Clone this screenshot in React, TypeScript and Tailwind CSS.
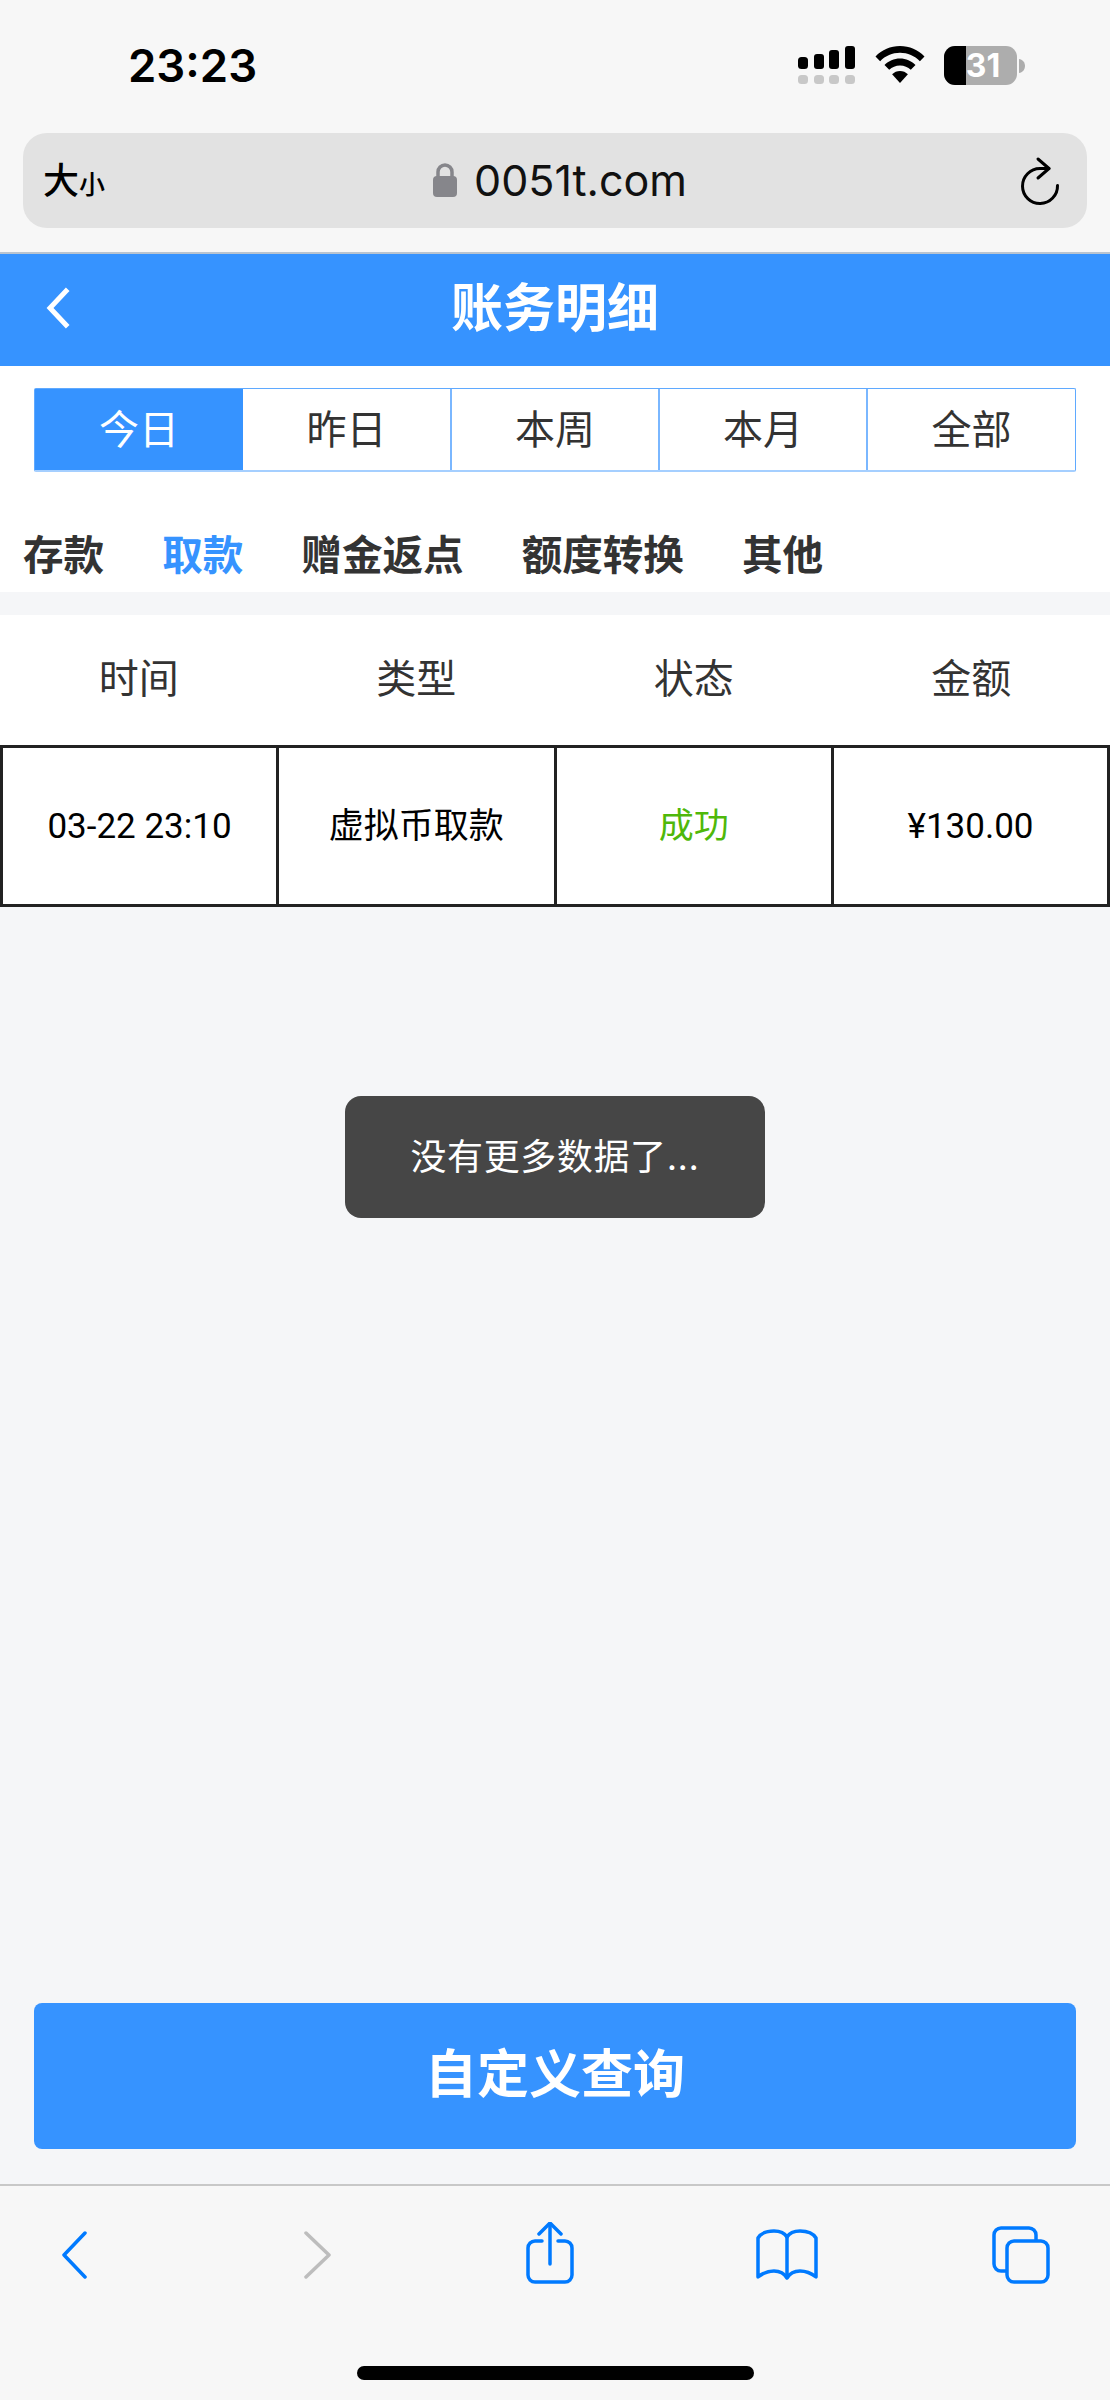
const cjk = "font-['Inter','Noto_Sans_CJK_SC',sans-serif]";

const ranges = ['今日', '昨日', '本周', '本月', '全部'];
const types = ['存款', '取款', '赠金返点', '额度转换', '其他'];
const columns = ['时间', '类型', '状态', '金额'];

const SignalIcon = () => (
  <svg width="58" height="39" viewBox="0 0 58 39">
    <rect x="0" y="11" width="10" height="12" rx="3.5" fill="#000" />
    <rect x="16" y="8" width="10" height="15" rx="3" fill="#000" />
    <rect x="31" y="4" width="10" height="19" rx="3" fill="#000" />
    <rect x="47" y="0" width="10" height="23" rx="3" fill="#000" />
    <rect x="0" y="29" width="10" height="9" rx="3.5" fill="#c8c8c8" />
    <rect x="16" y="29" width="10" height="9" rx="3.5" fill="#c8c8c8" />
    <rect x="31" y="29" width="10" height="9" rx="3.5" fill="#c8c8c8" />
    <rect x="47" y="29" width="10" height="9" rx="3.5" fill="#c8c8c8" />
  </svg>
);

const WifiIcon = () => (
  <svg width="50" height="37" viewBox="0 0 50 37">
    <path d="M25 0C15.5 0 7 3.8.5 10.5l4.6 4.8C10.4 9.8 17.3 6.8 25 6.8s14.6 3 19.9 8.5l4.6-4.8C43 3.8 34.5 0 25 0z" fill="#000" />
    <path d="M25 12.5c-6 0-11.400 2.400-15.500 6.500l4.700 4.800C17 21 20.800 19.400 25 19.400s8 1.600 10.800 4.400l4.700-4.800C36.400 14.900 31 12.500 25 12.500z" fill="#000" />
    <path d="M25 25c-3 0-5.800 1.200-7.900 3.300L25 37l7.900-8.700C30.800 26.200 28 25 25 25z" fill="#000" />
  </svg>
);

const Battery = () => (
  <div className="flex items-center">
    <div className="relative flex h-[39px] w-[73px] overflow-hidden rounded-[11px] bg-[#adadad]">
      <div className="h-full w-[22px] bg-black" />
      <span className="absolute left-[21px] top-0 flex h-full w-[36px] items-center justify-center font-['Inter',sans-serif] text-[32px] font-bold text-white">31</span>
    </div>
    <svg width="7" height="14" viewBox="0 0 7 14" className="ml-[2px]">
      <path d="M0 0c3.500.5 6 3.300 6 7s-2.500 6.500-6 7z" fill="#adadad" />
    </svg>
  </div>
);

const LockIcon = () => (
  <svg width="24" height="34" viewBox="0 0 24 34">
    <path d="M5 15V9a7 7 0 0 1 14 0v6" fill="none" stroke="#86868b" strokeWidth="3.500" />
    <rect x="0" y="13" width="24" height="21" rx="4" fill="#86868b" />
  </svg>
);

const ReloadIcon = () => (
  <svg width="44" height="50" viewBox="0 0 44 50" fill="none" stroke="#000" strokeWidth="3" strokeLinecap="round" strokeLinejoin="round">
    <path d="M39.500 29.500A17.500 17.500 0 1 1 22 12.500h9" />
    <path d="M20 3l11 9.500L20 22" />
  </svg>
);

const HeaderBack = () => (
  <svg width="28" height="42" viewBox="0 0 28 42" fill="none" stroke="#fff" strokeWidth="5" strokeLinecap="square">
    <path d="M22 4L6 21l16 17" />
  </svg>
);

const ChevronLeft = () => (
  <svg width="27" height="48" viewBox="0 0 27 48" fill="none" stroke="#007aff" strokeWidth="3.500" strokeLinecap="round" strokeLinejoin="round">
    <path d="M24 2L3 24l21 22" />
  </svg>
);

const ChevronRight = () => (
  <svg width="29" height="48" viewBox="0 0 29 48" fill="none" stroke="#bdbdbd" strokeWidth="3.500" strokeLinecap="round" strokeLinejoin="round">
    <path d="M3 2l23 22L3 46" />
  </svg>
);

const ShareIcon = () => (
  <svg width="48" height="62" viewBox="0 0 48 62" fill="none" stroke="#007aff" strokeWidth="3.500" strokeLinecap="round" strokeLinejoin="round">
    <path d="M16 19H9a7 7 0 0 0-7 7v27a7 7 0 0 0 7 7h30a7 7 0 0 0 7-7V26a7 7 0 0 0-7-7h-7" />
    <path d="M24 42V2" />
    <path d="M13 12L24 1l11 11" />
  </svg>
);

const BookIcon = () => (
  <svg width="62" height="52" viewBox="0 0 62 52" fill="none" stroke="#007aff" strokeWidth="3.500" strokeLinecap="round" strokeLinejoin="round">
    <path d="M31 9C28 4 23 3 18 3 11 3 5 5 2 10v39c5-4 10-6 16-6 6 0 10 2 13 7 3-5 7-7 13-7 6 0 11 2 16 6V10c-3-5-9-7-16-7-5 0-10 1-13 6z" />
    <path d="M31 9v40" />
  </svg>
);

const TabsIcon = () => (
  <svg width="58" height="58" viewBox="0 0 58 58" fill="none" stroke="#007aff" strokeWidth="3.500" strokeLinejoin="round">
    <path d="M14 45H9a7 7 0 0 1-7-7V9a7 7 0 0 1 7-7h28a7 7 0 0 1 7 7v5" />
    <rect x="15" y="15" width="41" height="41" rx="7" />
  </svg>
);

export default function App() {
  return (
    <div className={`relative flex h-[2400px] w-[1110px] flex-col overflow-hidden bg-[#f5f6f8] ${cjk}`}>
      {/* safari top chrome */}
      <div className="h-[252px] bg-[#f7f7f7] pt-[46px]">
        <div className="flex h-[87px] items-start justify-between pl-[128px] pr-[84px]">
          <span className="-mt-[3px] font-['Inter',sans-serif] text-[45.5px] font-semibold leading-[46px] text-black">23:23</span>
          <div className="flex items-start gap-[19px]">
            <SignalIcon />
            <WifiIcon />
            <Battery />
          </div>
        </div>
        <div className="relative mx-[23px] flex h-[95px] items-center justify-between rounded-[24px] bg-[#e2e2e2] pl-[20px] pr-[25px]">
          <div className="flex items-baseline font-medium text-black">
            <span className="text-[36px] leading-none">大</span>
            <span className="text-[26px] leading-none">小</span>
          </div>
          <div className="absolute left-[410px] top-[23px] flex items-center gap-[17px]">
            <LockIcon />
            <span className="font-['Inter',sans-serif] text-[43px] leading-[48px] text-[#111]">0051t.com</span>
          </div>
          <ReloadIcon />
        </div>
      </div>

      {/* page header */}
      <div className="relative flex h-[114px] items-center justify-center border-t-2 border-[#b9c4d0] bg-[#3693ff]">
        <div className="absolute left-[44px] top-[33px]">
          <HeaderBack />
        </div>
        <span className="-mt-[2px] text-[52px] font-bold text-white">账务明细</span>
      </div>

      {/* filters */}
      <div className="h-[226px] bg-white px-[34px] pt-[22px]">
        <div className="grid h-[84px] grid-cols-[208px_207px_208px_208px_1fr] rounded-[2px] border border-[#5fa9ff] border-b-2 border-b-[#a5cfff]">
          {ranges.map((range, index) => (
            <div
              key={range}
              className={
                index === 0
                  ? 'flex items-center justify-center bg-[#3693ff] text-[40px] text-white'
                  : index === 1
                    ? 'flex items-center justify-center text-[40px] text-[#333]'
                    : 'flex items-center justify-center border-l-2 border-[#7ab7ff] text-[40px] text-[#333]'
              }
            >
              {range}
            </div>
          ))}
        </div>
        <div className="-mx-[11px] mt-[55px] flex gap-[58px]">
          {types.map((type, index) => (
            <span
              key={type}
              className={index === 1 ? 'text-[40.6px] font-bold leading-[58px] text-[#3693ff]' : 'text-[40.6px] font-bold leading-[58px] text-[#333]'}
            >
              {type}
            </span>
          ))}
        </div>
      </div>

      {/* list */}
      <div className="mt-[23px] grid h-[130px] grid-cols-4 bg-white">
        {columns.map((col) => (
          <div key={col} className="-mt-[2px] flex items-center justify-center text-[40px] text-[#333]">
            {col}
          </div>
        ))}
      </div>
      <div className="grid h-[162px] grid-cols-[276px_277.5px_277.5px_1fr] border-y-[3px] border-[#222] bg-white font-['Roboto','Noto_Sans_CJK_SC',sans-serif] text-[35px] text-black">
        <div className="flex items-center justify-center border-l-[3px] border-[#222] pt-[3px]">03-22 23:10</div>
        <div className="flex items-center justify-center border-l-[3px] border-[#222] pt-[3px]">虚拟币取款</div>
        <div className="flex items-center justify-center border-l-[3px] border-[#222] pt-[3px] text-[#4fb80a]">成功</div>
        <div className="flex items-center justify-center border-x-[3px] border-[#222] pt-[3px]">¥130.00</div>
      </div>

      {/* toast */}
      <div className="absolute left-[345px] top-[1096px] flex h-[122px] w-[420px] items-center justify-center rounded-[16px] bg-[#464646] text-[36px] tracking-[0.6px] text-white">
        没有更多数据了...
      </div>

      <div className="mx-[34px] mt-auto flex h-[146px] items-center justify-center rounded-[8px] bg-[#3693ff] text-[52px] font-bold text-white">
        <span className="-mt-[2px]">自定义查询</span>
      </div>

      {/* safari bottom toolbar */}
      <div className="relative mt-[35px] h-[216px] border-t-2 border-[#c8c8c8] bg-[#f7f7f7]">
        <div className="absolute left-[61px] top-[45px]"><ChevronLeft /></div>
        <div className="absolute left-[303px] top-[45px]"><ChevronRight /></div>
        <div className="absolute left-[526px] top-[36px]"><ShareIcon /></div>
        <div className="absolute left-[756px] top-[42px]"><BookIcon /></div>
        <div className="absolute left-[992px] top-[40px]"><TabsIcon /></div>
        <div className="absolute left-[357px] top-[180px] h-[14px] w-[397px] rounded-full bg-black" />
      </div>
    </div>
  );
}
